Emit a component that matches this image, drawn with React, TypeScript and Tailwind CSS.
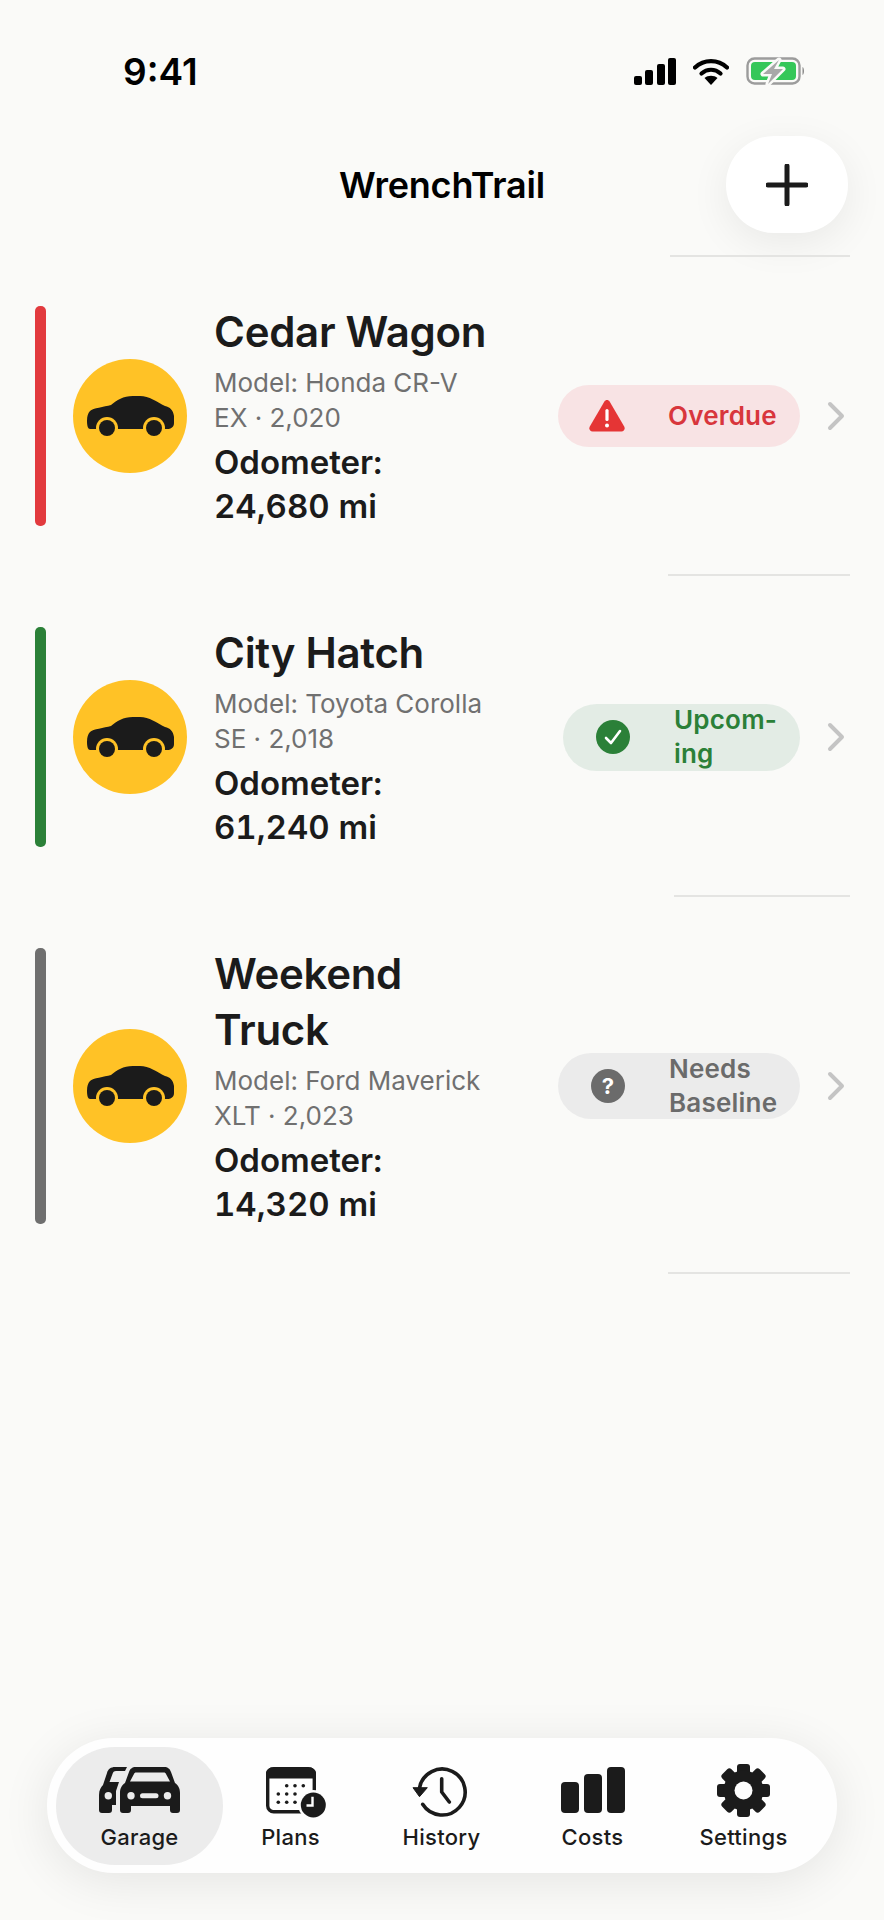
// WrenchTrail - Garage screen

import { ChevronRight } from 'lucide-react';

const INK = '#1b1b1b';

function CarGlyph() {
  return (
    <svg width="87" height="41" viewBox="0 0 87 41">
      <path
        fill={INK}
        d="M3 15C6 12 17 11 24 9C30 4 36 0 46 0H53C62 0 70 6 78 10C83 11 86 14 87 20V27C87 31 84 33 80 33H3C1 33 0 30 0 25C0 20 1 17 3 15Z"
      />
      <circle cx="20" cy="32" r="11" fill="#ffc226" />
      <circle cx="67" cy="32" r="11" fill="#ffc226" />
      <circle cx="20" cy="32" r="8" fill={INK} />
      <circle cx="67" cy="32" r="8" fill={INK} />
    </svg>
  );
}

function WarnIcon() {
  return (
    <svg width="36" height="32" viewBox="0 0 36 32">
      <path
        fill="#e53535"
        d="M15.4 1.6C16.6-.4 19.4-.4 20.6 1.6L35.2 26.5C36.4 28.6 35 31.5 32.5 31.5H3.5C1 31.5-.4 28.6.8 26.5Z"
      />
      <rect x="16.4" y="9" width="3.2" height="12" rx="1.6" fill="#fff" />
      <circle cx="18" cy="25.5" r="2" fill="#fff" />
    </svg>
  );
}

function CheckIcon() {
  return (
    <svg width="34" height="34" viewBox="0 0 34 34">
      <circle cx="17" cy="17" r="17" fill="#2b8038" />
      <path d="M10 18l5 5 9-12" fill="none" stroke="#fff" strokeWidth="2.6" strokeLinecap="round" strokeLinejoin="round" />
    </svg>
  );
}

function QuestionIcon() {
  return (
    <div className="flex h-[34px] w-[34px] items-center justify-center rounded-full bg-[#6b6b6b] text-[22px] font-bold leading-none text-white">
      ?
    </div>
  );
}

function GarageIcon() {
  return (
    <svg width="81" height="46" viewBox="0 0 81 46" className="block">
      {/* car behind */}
      <path
        fill={INK}
        d="M0 28C0 23 2 20 4 18L8 6C9 2 12 0 16 0H28L26 4H17C15 4 14 5 13.5 7L10.5 15H20L17 24V38H13V43C13 45 12 46 10 46H3C1 46 0 45 0 43Z"
      />
      <circle cx="9.3" cy="28.7" r="3.7" fill="#ececec" />
      {/* car in front */}
      <path
        fill={INK}
        fillRule="evenodd"
        d="M21 26C21 21 23 18 26 16L30 5C31 2 33 0 37 0H65C69 0 71 2 72 5L76 16C79 18 81 21 81 26V43C81 45 80 46 78 46H74C72 46 71 45 71 43V39H32V43C32 45 31 46 29 46H24C22 46 21 45 21 43ZM31 14.500H71L67 7C66.500 6 66 5.500 65 5.500H37C36 5.500 35.500 6 35 7Z"
      />
      <circle cx="32" cy="28.7" r="3.700" fill="#ececec" />
      <circle cx="68.500" cy="28.700" r="3.700" fill="#ececec" />
      <rect x="41" y="26.200" width="18.500" height="5" rx="2.500" fill="#ececec" />
    </svg>
  );
}

function PlansIcon() {
  const dots = [
    [20.7, 18.7], [29, 18.7], [37.3, 18.7],
    [12.3, 27], [20.7, 27], [29, 27],
    [12.3, 35.3], [20.7, 35.3], [29, 35.3],
  ];
  return (
    <svg width="61" height="51" viewBox="0 0 61 51" className="ml-[12px] block">
      <rect x="1.700" y="1.700" width="46.600" height="43" rx="6" fill="#fff" stroke={INK} strokeWidth="3.400" />
      <path fill={INK} d="M0 11.500V6C0 3 3 0.500 6 0.500H44C47 0.500 50 3 50 6V11.500Z" />
      {dots.map(([x, y]) => (
        <circle key={`${x}-${y}`} cx={x} cy={y} r="1.800" fill={INK} />
      ))}
      <circle cx="47.300" cy="38" r="15" fill="#fefefe" />
      <circle cx="47.300" cy="38" r="12.500" fill={INK} />
      <path d="M46.500 29.700V38.500H40.500" fill="none" stroke="#fff" strokeWidth="2.400" />
    </svg>
  );
}

function HistoryIcon() {
  return (
    <svg width="60" height="50" viewBox="0 0 60 50" className="block">
      <path d="M7.500 21A23 23 0 1 1 10.700 37.300" fill="none" stroke={INK} strokeWidth="3.600" strokeLinecap="round" />
      <path d="M1 20.700H15.300L7.500 29.700Z" fill={INK} stroke={INK} strokeWidth="1" strokeLinejoin="round" />
      <path d="M29.700 11.700V25L37.300 35" fill="none" stroke={INK} strokeWidth="3.600" strokeLinecap="round" strokeLinejoin="round" />
    </svg>
  );
}

function CostsIcon() {
  return (
    <svg width="64" height="46" viewBox="0 0 64 46" className="block">
      <rect x="0" y="15" width="18" height="31" rx="4" fill={INK} />
      <rect x="23" y="7" width="18" height="39" rx="4" fill={INK} />
      <rect x="46" y="0" width="18" height="46" rx="4" fill={INK} />
    </svg>
  );
}

function GearIcon() {
  return (
    <svg width="53" height="53" viewBox="0 0 53 53" className="-mt-[3px] block">
      {[0, 45, 90, 135, 180, 225, 270, 315].map((deg) => (
        <rect key={deg} x="20" y="0" width="13" height="14" rx="3" fill={INK} transform={`rotate(${deg} 26.500 26.500)`} />
      ))}
      <circle cx="26.500" cy="26.500" r="20" fill={INK} />
      <circle cx="26.500" cy="26.500" r="9" fill="#fefefe" />
    </svg>
  );
}

const VEHICLES = [
  {
    name: 'Cedar Wagon',
    model: 'Model: Honda CR-V EX · 2,020',
    odometer: '24,680 mi',
    bar: 'bg-[#e23a3e]',
    rowTop: 'pt-[49px]',
    pill: 'bg-[#f8e3e4] text-[#d8363c] h-[62px] w-[242px] pl-[31px] gap-[43px]',
    icon: <WarnIcon />,
    status: 'Overdue',
    divider: 'ml-[668px]',
  },
  {
    name: 'City Hatch',
    model: 'Model: Toyota Corolla SE · 2,018',
    odometer: '61,240 mi',
    bar: 'bg-[#2b8038]',
    rowTop: 'pt-[51px]',
    pill: 'bg-[#e3ece5] text-[#2b8038] h-[67px] w-[237px] pl-[32px] gap-[43px]',
    icon: <CheckIcon />,
    status: 'Upcom-ing',
    divider: 'ml-[674px]',
  },
  {
    name: 'Weekend Truck',
    model: 'Model: Ford Maverick XLT · 2,023',
    odometer: '14,320 mi',
    bar: 'bg-[#6f6f6f]',
    rowTop: 'pt-[51px]',
    pill: 'bg-[#ebebeb] text-[#6b6b6b] h-[66px] w-[242px] pl-[32px] gap-[43px]',
    icon: <QuestionIcon />,
    status: 'Needs Baseline',
    divider: 'ml-[668px]',
  },
];

const TABS = [
  { label: 'Garage', icon: <GarageIcon />, active: true },
  { label: 'Plans', icon: <PlansIcon /> },
  { label: 'History', icon: <HistoryIcon /> },
  { label: 'Costs', icon: <CostsIcon /> },
  { label: 'Settings', icon: <GearIcon /> },
];

export default function App() {
  return (
    <div className="flex h-[1920px] w-[884px] flex-col overflow-hidden bg-[#fafaf8] font-['Inter',sans-serif] text-[#1b1b1b]">
      {/* Status bar */}
      <div className="flex h-[136px] items-start justify-between pl-[123px] pr-[79px] pt-[50px]">
        <span className="text-[37px] font-semibold leading-[44px] text-black">9:41</span>
        <div className="mt-[7px] flex items-center gap-[17px]">
          <svg width="42" height="27" viewBox="0 0 42 27">
            <rect x="0" y="18" width="8" height="9" rx="2" fill="#000" />
            <rect x="11" y="12" width="8" height="15" rx="2" fill="#000" />
            <rect x="23" y="6" width="8" height="21" rx="2" fill="#000" />
            <rect x="34" y="0" width="8" height="27" rx="2" fill="#000" />
          </svg>
          <svg width="36" height="27" viewBox="0 0 36 27">
            <path d="M2 9.500C11 1 25 1 34 9.500" fill="none" stroke="#000" strokeWidth="4.200" strokeLinecap="round" />
            <path d="M8.500 15.500C14 10.500 22 10.500 27.500 15.500" fill="none" stroke="#000" strokeWidth="4.200" strokeLinecap="round" />
            <path d="M18 27L11.500 20C15 17 21 17 24.500 20Z" fill="#000" />
          </svg>
          <svg width="59" height="28" viewBox="0 0 59 28">
            <rect x="1.500" y="1.500" width="52" height="25" rx="7" fill="none" stroke="#9c9c9c" strokeWidth="2.400" />
            <rect x="5" y="5" width="45" height="18" rx="4" fill="#35c759" />
            <path d="M56.500 10C58.500 11 58.500 17 56.500 18Z" fill="#8a8a8a" />
            <path d="M33 3L17 17H26L22 27L37 12H28Z" fill="#fafaf8" stroke="#fafaf8" strokeWidth="5" strokeLinejoin="round" />
            <path d="M33 3L17 17H26L22 27L37 12H28Z" fill="#a8a8a8" />
          </svg>
        </div>
      </div>

      {/* Header */}
      <div className="grid h-[97px] grid-cols-[1fr_auto_1fr] items-center">
        <div />
        <h1 className="text-[36px] font-semibold leading-[44px] tracking-[-0.2px] text-black">WrenchTrail</h1>
        <div className="flex justify-end pr-[36px]">
          <button className="flex h-[97px] w-[122px] items-center justify-center rounded-[48px] bg-white shadow-[0_10px_40px_rgba(0,0,0,0.07)]">
            <svg width="42" height="42" viewBox="0 0 42 42">
              <path d="M21 2V40M2 21H40" fill="none" stroke="#1b1b1b" strokeWidth="5" strokeLinecap="round" />
            </svg>
          </button>
        </div>
      </div>
      <div className="ml-[670px] mr-[34px] mt-[22px] h-[2px] bg-[#e4e4e2]" />

      {/* Vehicles */}
      {VEHICLES.map((v) => (
        <div key={v.name} className={v.rowTop}>
          <div className="flex items-stretch pl-[35px]">
            <div className={`w-[11px] shrink-0 rounded-[5px] ${v.bar}`} />
            <div className="ml-[27px] flex shrink-0 items-center">
              <div className="flex h-[114px] w-[114px] items-center justify-center rounded-full bg-[#ffc226]">
                <CarGlyph />
              </div>
            </div>
            <div className="-mb-[2px] ml-[27px] w-[280px] shrink-0">
              <div className="-mt-[2px] text-[42px] font-semibold leading-[56px] tracking-[-0.3px]">{v.name}</div>
              <div className="mt-[6px] text-[26px] leading-[34.500px] text-[#707070]">{v.model}</div>
              <div className="mt-[5px] text-[33px] font-semibold leading-[44px] tabular-nums">
                Odometer:
                <br />
                {v.odometer}
              </div>
            </div>
            <div className="flex flex-1 items-center justify-end pr-[24px]">
              <div className={`flex shrink-0 items-center rounded-full ${v.pill}`}>
                <div className="flex w-[36px] shrink-0 justify-center">{v.icon}</div>
                <div className="w-[112px] text-[26px] font-semibold leading-[34px] tracking-[0.2px] [overflow-wrap:anywhere]">
                  {v.status}
                </div>
              </div>
              <ChevronRight className="ml-[12px] h-[48px] w-[48px] shrink-0 text-[#c4c4c4]" strokeWidth={2} />
            </div>
          </div>
          <div className={`mr-[34px] mt-[48px] h-[2px] bg-[#e4e4e2] ${v.divider}`} />
        </div>
      ))}

      {/* Tab bar */}
      <div className="mx-[47px] mb-[47px] mt-auto grid h-[135px] grid-cols-[repeat(5,151px)] items-center rounded-[67px] bg-[#fefefe] pl-[17px] shadow-[0_8px_50px_rgba(0,0,0,0.09)]">
        {TABS.map((t) => (
          <div
            key={t.label}
            className={`flex h-[118px] flex-col items-center rounded-[59px] ${t.active ? '-mx-2 bg-[#ececec]' : ''}`}
          >
            <div className="flex h-[76px] items-start pt-[20px]">{t.icon}</div>
            <span className="text-[22px] font-medium leading-[28px] tracking-[0.3px]">{t.label}</span>
          </div>
        ))}
      </div>
    </div>
  );
}
